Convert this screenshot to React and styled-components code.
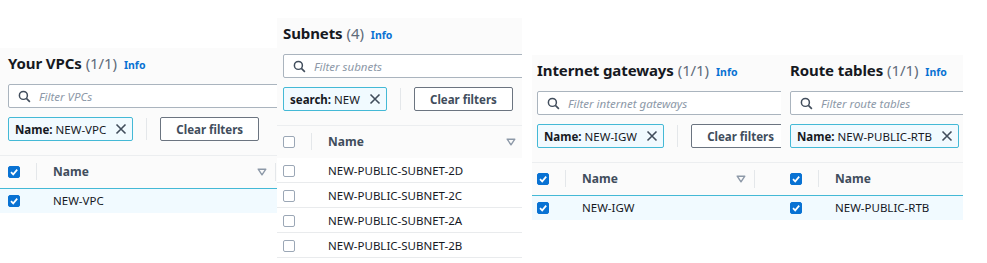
import React from "react";
import styled, { createGlobalStyle } from "styled-components";

const Global = createGlobalStyle`
  html, body {
    margin: 0;
    padding: 0;
    background: #ffffff;
  }
  body {
    font-family: "Noto Sans", "Open Sans", sans-serif;
    color: #16191f;
  }
`;

const panels = [
  {
    key: "vpc",
    title: "Your VPCs",
    count: "(1/1)",
    width: 277,
    top: 48,
    pad: 8,
    nameWidth: 222,
    placeholder: "Filter VPCs",
    token: { label: "Name:", value: "NEW-VPC" },
    clear: true,
    rows: [{ name: "NEW-VPC", checked: true }],
    headChecked: true,
  },
  {
    key: "subnets",
    title: "Subnets",
    count: "(4)",
    width: 245,
    top: 18,
    pad: 6,
    nameWidth: 196,
    placeholder: "Filter subnets",
    token: { label: "search:", value: "NEW" },
    clear: true,
    rows: [
      { name: "NEW-PUBLIC-SUBNET-2D" },
      { name: "NEW-PUBLIC-SUBNET-2C" },
      { name: "NEW-PUBLIC-SUBNET-2A" },
      { name: "NEW-PUBLIC-SUBNET-2B" },
    ],
    headChecked: false,
    gapAfter: 10,
  },
  {
    key: "igw",
    title: "Internet gateways",
    count: "(1/1)",
    width: 249,
    top: 55,
    pad: 5,
    nameWidth: 172,
    placeholder: "Filter internet gateways",
    token: { label: "Name:", value: "NEW-IGW" },
    clear: true,
    rows: [{ name: "NEW-IGW", checked: true }],
    headChecked: true,
  },
  {
    key: "rtb",
    title: "Route tables",
    count: "(1/1)",
    width: 182,
    top: 55,
    pad: 9,
    nameWidth: 200,
    placeholder: "Filter route tables",
    token: { label: "Name:", value: "NEW-PUBLIC-RTB" },
    clear: false,
    rows: [{ name: "NEW-PUBLIC-RTB", checked: true }],
    headChecked: true,
  },
];

const Canvas = styled.div`
  display: flex;
  align-items: flex-start;
  width: 987px;
  height: 263px;
  overflow: hidden;
`;

const Panel = styled.section`
  flex: 0 0 ${(p) => p.$width}px;
  width: ${(p) => p.$width}px;
  margin-top: ${(p) => p.$top}px;
  margin-right: ${(p) => p.$gap || 0}px;
  background: #fbfbfb;
  overflow: hidden;
`;

const Inner = styled.div`
  width: ${(p) => p.$width + 60}px;
`;

const Head = styled.div`
  display: flex;
  align-items: baseline;
  height: 30px;
  padding: 5px 0 0 ${(p) => p.$pad}px;
  box-sizing: border-box;
`;

const Title = styled.h2`
  margin: 0;
  font-size: 15px;
  font-weight: 700;
  color: #16191f;
  letter-spacing: -0.1px;
`;

const Count = styled.span`
  font-weight: 400;
  color: #5f6b7a;
  margin-left: 4px;
`;

const Info = styled.span`
  font-size: 10.5px;
  font-weight: 700;
  color: #0972d3;
  margin-left: 7px;
`;

const SearchBox = styled.div`
  display: flex;
  align-items: center;
  gap: 8px;
  height: 24px;
  margin: 6px 0 0 ${(p) => p.$pad}px;
  padding: 0 9px;
  border: 1px solid #aab4be;
  border-radius: 2px;
  background: #ffffff;
  box-sizing: border-box;
`;

const Placeholder = styled.span`
  font-size: 11.5px;
  font-style: italic;
  color: #8d99a8;
`;

const FilterRow = styled.div`
  display: flex;
  align-items: center;
  height: 24px;
  margin: 9px 0 0 ${(p) => p.$pad}px;
`;

const Token = styled.div`
  display: flex;
  align-items: center;
  gap: 9px;
  height: 24px;
  padding: 0 5px 0 6px;
  border: 1px solid #44b9d6;
  border-radius: 2px;
  background: #f1faff;
  box-sizing: border-box;
  font-size: 11.5px;
  color: #16191f;
  white-space: nowrap;

  b {
    font-weight: 700;
    margin-right: 3px;
  }
`;

const VRule = styled.div`
  width: 1px;
  height: 22px;
  background: #e4e7ea;
  margin: 0 13px;
`;

const ClearButton = styled.div`
  display: flex;
  align-items: center;
  justify-content: center;
  flex: 0 0 99px;
  height: 24px;
  border: 1.5px solid #6b7480;
  border-radius: 2px;
  background: #ffffff;
  box-sizing: border-box;
  font-size: 11.5px;
  font-weight: 700;
  color: #414d5c;
  white-space: nowrap;
`;

const Table = styled.div`
  margin-top: 14px;
`;

const Row = styled.div`
  display: grid;
  grid-template-columns: 45px ${(p) => p.$nameWidth}px 1px;
  align-items: center;
  height: ${(p) => (p.$header ? 33 : 25)}px;
  padding-left: ${(p) => p.$pad}px;
  box-sizing: border-box;
  background: ${(p) => (p.$selected ? "#f1faff" : p.$header ? "transparent" : "#ffffff")};
  border-top: 1px solid
    ${(p) => (p.$selected ? "#44b9d6" : p.$header ? "#eceef0" : "transparent")};
  border-bottom: 1px solid ${(p) => (p.$header || p.$selected ? "transparent" : "#e9ebed")};
`;

const CheckCell = styled.div`
  display: flex;
  align-items: center;
  height: 100%;
  position: relative;

  &::after {
    content: "";
    display: ${(p) => (p.$rule ? "block" : "none")};
    position: absolute;
    left: 28px;
    top: 7px;
    bottom: 7px;
    width: 1px;
    background: #e4e7ea;
  }
`;

const NameCell = styled.div`
  display: flex;
  align-items: center;
  justify-content: space-between;
  font-size: ${(p) => (p.$header ? 12 : 11.5)}px;
  font-weight: ${(p) => (p.$header ? 700 : 400)};
  color: ${(p) => (p.$header ? "#414d5c" : "#16191f")};
  padding-right: 8px;
  white-space: nowrap;
`;

const ColRule = styled.div`
  width: 1px;
  height: 18px;
  background: ${(p) => (p.$show ? "#e4e7ea" : "transparent")};
`;

const Box = styled.span`
  display: inline-flex;
  align-items: center;
  justify-content: center;
  width: 12px;
  height: 12px;
  border-radius: 2px;
  box-sizing: border-box;
  background: ${(p) => (p.$checked ? "#0972d3" : "#ffffff")};
  border: 1px solid ${(p) => (p.$checked ? "#0972d3" : "#9ba7b6")};
`;

const Checkbox = ({ checked }) => (
  <Box $checked={checked}>
    {checked && (
      <svg width="10" height="10" viewBox="0 0 10 10">
        <polyline points="2,5.2 4.2,7.4 8.2,2.6" fill="none" stroke="#fff" strokeWidth="1.7" />
      </svg>
    )}
  </Box>
);

const SearchIcon = () => (
  <svg width="13" height="13" viewBox="0 0 14 14">
    <circle cx="5.8" cy="5.8" r="4.3" fill="none" stroke="#414d5c" strokeWidth="1.6" />
    <line x1="9" y1="9" x2="12.8" y2="12.8" stroke="#414d5c" strokeWidth="1.7" />
  </svg>
);

const CloseIcon = () => (
  <svg width="12" height="12" viewBox="0 0 12 12">
    <path d="M1.5 1.5 L10.5 10.5 M10.5 1.5 L1.5 10.5" stroke="#414d5c" strokeWidth="1.6" />
  </svg>
);

const SortIcon = () => (
  <svg width="10" height="8" viewBox="0 0 10 8">
    <path d="M1.2 1.2 H8.8 L5 6.8 Z" fill="none" stroke="#8d99a8" strokeWidth="1.4" strokeLinejoin="round" />
  </svg>
);

const TablePanel = ({ panel }) => {
  const { pad, width, nameWidth } = panel;
  return (
    <Panel $width={width} $top={panel.top} $gap={panel.gapAfter}>
      <Inner $width={width}>
        <Head $pad={pad}>
          <Title>
            {panel.title}
            <Count>{panel.count}</Count>
          </Title>
          <Info>Info</Info>
        </Head>
        <SearchBox $pad={pad}>
          <SearchIcon />
          <Placeholder>{panel.placeholder}</Placeholder>
        </SearchBox>
        <FilterRow $pad={pad}>
          <Token>
            <span>
              <b>{panel.token.label}</b>
              {panel.token.value}
            </span>
            <CloseIcon />
          </Token>
          {panel.clear && (
            <>
              <VRule />
              <ClearButton>Clear filters</ClearButton>
            </>
          )}
        </FilterRow>
        <Table>
          <Row $header $pad={pad} $nameWidth={nameWidth}>
            <CheckCell $rule>
              <Checkbox checked={panel.headChecked} />
            </CheckCell>
            <NameCell $header>
              Name
              <SortIcon />
            </NameCell>
            <ColRule $show />
          </Row>
          {panel.rows.map((r) => (
            <Row key={r.name} $pad={pad} $nameWidth={nameWidth} $selected={r.checked}>
              <CheckCell>
                <Checkbox checked={r.checked} />
              </CheckCell>
              <NameCell>{r.name}</NameCell>
              <ColRule />
            </Row>
          ))}
        </Table>
      </Inner>
    </Panel>
  );
};

export default function App() {
  return (
    <>
      <Global />
      <Canvas>
        {panels.map((p) => (
          <TablePanel key={p.key} panel={p} />
        ))}
      </Canvas>
    </>
  );
}
